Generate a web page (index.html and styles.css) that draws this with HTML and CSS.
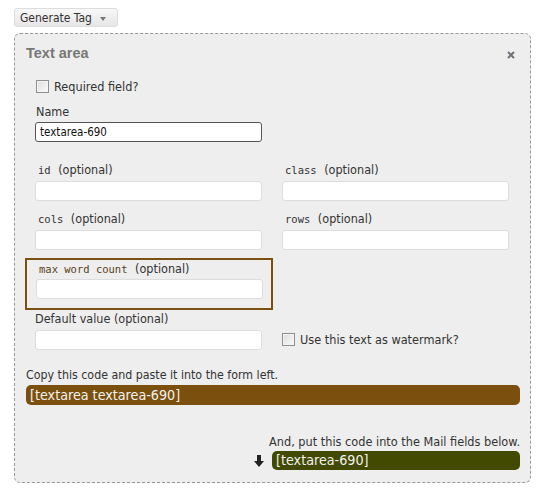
FILE: index.html
```html
<!DOCTYPE html>
<html>
<head>
<meta charset="utf-8">
<link rel="stylesheet" href="styles.css">
</head>
<body>
<div class="page">
  <div class="gen-btn">Generate Tag <span class="caret"></span></div>
  <div class="box">
    <div class="title-row">
      <span class="title">Text area</span>
      <svg class="close" width="8" height="8" viewBox="0 0 8 8"><path d="M1 1L7 7M7 1L1 7" stroke="#6f737a" stroke-width="2"/></svg>
    </div>
    <div class="form">
      <label class="check-row"><span class="cb"></span>Required field?</label>
      <div class="lbl name-lbl">Name</div>
      <div class="inp name-inp">textarea-690</div>
      <div class="grid">
        <div class="cell">
          <div class="lbl"><span class="mono">id</span> (optional)</div>
          <div class="inp"></div>
        </div>
        <div class="cell">
          <div class="lbl"><span class="mono">class</span> (optional)</div>
          <div class="inp"></div>
        </div>
        <div class="cell">
          <div class="lbl"><span class="mono">cols</span> (optional)</div>
          <div class="inp"></div>
        </div>
        <div class="cell">
          <div class="lbl"><span class="mono">rows</span> (optional)</div>
          <div class="inp"></div>
        </div>
      </div>
      <div class="maxbox">
        <div class="lbl"><span class="mono brownish">max word count</span> (optional)</div>
        <div class="inp"></div>
      </div>
      <div class="grid grid-last">
        <div class="cell">
          <div class="lbl">Default value (optional)</div>
          <div class="inp"></div>
        </div>
        <div class="cell cell-check">
          <label class="check-row"><span class="cb"></span>Use this text as watermark?</label>
        </div>
      </div>
    </div>
    <div class="code-section">
      <div class="hint">Copy this code and paste it into the form left.</div>
      <div class="bar bar-brown">[textarea textarea-690]</div>
    </div>
    <div class="mail-section">
      <div class="hint hint-mail">And, put this code into the Mail fields below.</div>
      <div class="mail-row">
        <svg class="arrow" width="10" height="12" viewBox="0 0 10 12"><path d="M3 0h4v6h3l-5 6l-5-6h3z" fill="#222"/></svg>
        <div class="bar bar-green">[textarea-690]</div>
      </div>
    </div>
  </div>
</div>
</body>
</html>
```
FILE: styles.css
```css
* { box-sizing: border-box; }
body {
  margin: 0;
  background: #fff;
  font-family: "DejaVu Sans Condensed", "DejaVu Sans", sans-serif;
  font-size: 12px;
  color: #333;
}
.page {
  padding: 8px 0 0 14px;
}
.gen-btn {
  display: inline-flex;
  align-items: center;
  height: 19px;
  width: 104px;
  padding: 0 0 0 5px;
  border: 1px solid #ddd;
  border-radius: 3px;
  background: linear-gradient(#f8f8f8, #e6e6e6);
  font-size: 12px;
  color: #333;
}
.caret {
  display: inline-block;
  margin-left: 8px;
  margin-top: 2px;
  border-left: 3.5px solid transparent;
  border-right: 3.5px solid transparent;
  border-top: 4px solid #777;
}
.box {
  margin-top: 6px;
  width: 517px;
  height: 450px;
  border: 1px dashed #999;
  border-radius: 6px;
  background: #eee;
}
.title-row {
  display: flex;
  justify-content: space-between;
  align-items: center;
  padding: 10px 15px 0 11px;
  height: 28px;
}
.title {
  font-family: "Liberation Sans", Arial, sans-serif;
  font-weight: bold;
  font-size: 14.5px;
  color: #777;
}
.close {
  margin-top: 4px;
}
.form {
  padding: 0 0 0 20px;
}
.check-row {
  display: flex;
  align-items: center;
  height: 18px;
  font-size: 12.6px;
  color: #333;
}
.form > .check-row {
  margin-top: 15px;
  padding-left: 1px;
}
.cb {
  display: inline-block;
  width: 13px;
  height: 13px;
  border: 1px solid #8f8f8f;
  background: linear-gradient(135deg, #dcdcdc, #fbfbfb);
  box-shadow: inset 0 0 0 1px #f4f4f4;
  margin-right: 5px;
}
.lbl {
  height: 16px;
  line-height: 16px;
  font-size: 12.5px;
  color: #333;
  white-space: nowrap;
}
.name-lbl {
  margin-top: 9px;
  padding-left: 1px;
}
.inp {
  width: 227px;
  height: 20px;
  margin-top: 3px;
  background: #fff;
  border: 1px solid #ddd;
  border-radius: 3px;
  line-height: 18px;
  padding-left: 4px;
  font-size: 11.5px;
  color: #111;
}
.name-inp {
  margin-top: 2px;
  border-color: #555;
}
.grid {
  display: grid;
  grid-template-columns: 227px 227px;
  column-gap: 20px;
  row-gap: 10px;
  margin-top: 20px;
}
.grid .lbl { padding-left: 3px; }
.mono {
  font-family: "DejaVu Sans Mono", monospace;
  font-size: 10.5px;
  margin-right: 4px;
}
.brownish { color: #5a4020; }
.maxbox {
  margin: 8px 0 0 -10px;
  width: 248px;
  height: 52px;
  border: 2px solid #7b4f10;
  padding: 1px 0 0 9px;
}
.maxbox .inp { margin-top: 2px; }
.maxbox .lbl { padding-left: 3px; }
.grid-last {
  margin-top: 1px;
}
.grid-last .lbl { padding-left: 0; }
.cell-check {
  display: flex;
  align-items: flex-end;
  padding-bottom: 2px;
}
.code-section {
  padding: 17px 10px 0 11px;
}
.hint {
  font-size: 12.3px;
  line-height: 16px;
  color: #333;
  white-space: nowrap;
}
.hint-mail { font-size: 12.6px; }
.bar {
  height: 20px;
  line-height: 20px;
  border-radius: 5px;
  color: #f2f2f2;
  font-size: 14.2px;
  padding-left: 4px;
}
.bar-brown {
  margin-top: 2px;
  background: #7b500e;
}
.mail-section {
  margin-top: 29px;
  padding-right: 10px;
  display: flex;
  flex-direction: column;
  align-items: flex-end;
}
.mail-row {
  display: flex;
  align-items: center;
  margin-top: 1px;
}
.arrow { margin-right: 8px; }
.bar-green {
  width: 248px;
  height: 19px;
  line-height: 19px;
  background: #414a00;
}
```
